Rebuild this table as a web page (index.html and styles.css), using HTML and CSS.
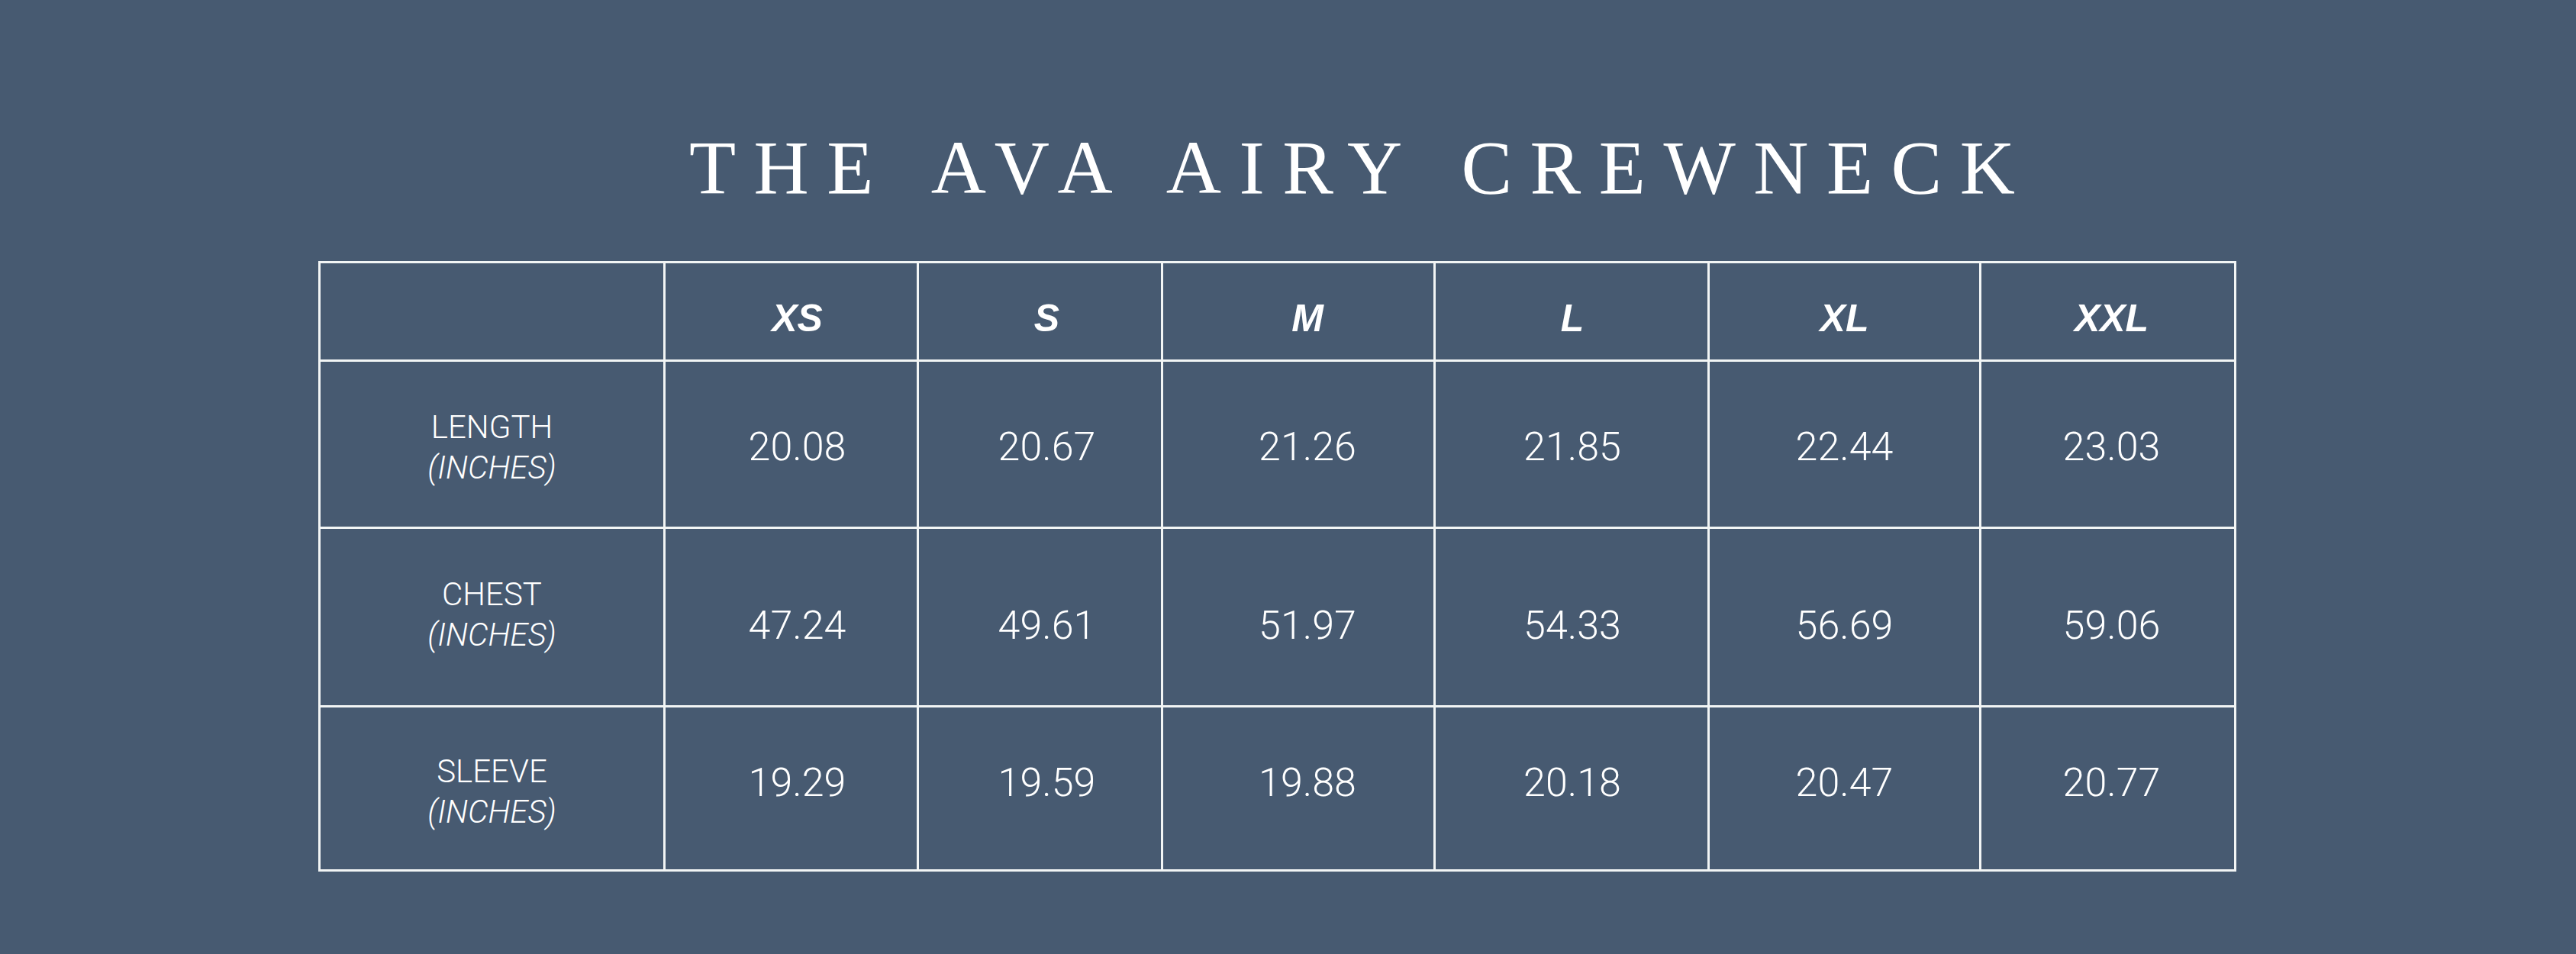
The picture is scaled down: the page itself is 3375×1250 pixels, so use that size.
FILE: index.html
```html
<!DOCTYPE html>
<html lang="en">
<head>
<meta charset="utf-8">
<title>The Ava Airy Crewneck – Size Chart</title>
<link rel="stylesheet" href="styles.css">
</head>
<body>
<main class="page">
  <h1 class="title">THE AVA AIRY CREWNECK</h1>
  <div class="chart">
    <div class="cell head"></div>
    <div class="cell head">XS</div>
    <div class="cell head">S</div>
    <div class="cell head">M</div>
    <div class="cell head">L</div>
    <div class="cell head">XL</div>
    <div class="cell head">XXL</div>

    <div class="cell label r1"><span>LENGTH</span><em>(INCHES)</em></div>
    <div class="cell val r1">20.08</div>
    <div class="cell val r1">20.67</div>
    <div class="cell val r1">21.26</div>
    <div class="cell val r1">21.85</div>
    <div class="cell val r1">22.44</div>
    <div class="cell val r1">23.03</div>

    <div class="cell label r2"><span>CHEST</span><em>(INCHES)</em></div>
    <div class="cell val r2">47.24</div>
    <div class="cell val r2">49.61</div>
    <div class="cell val r2">51.97</div>
    <div class="cell val r2">54.33</div>
    <div class="cell val r2">56.69</div>
    <div class="cell val r2">59.06</div>

    <div class="cell label r3"><span>SLEEVE</span><em>(INCHES)</em></div>
    <div class="cell val r3">19.29</div>
    <div class="cell val r3">19.59</div>
    <div class="cell val r3">19.88</div>
    <div class="cell val r3">20.18</div>
    <div class="cell val r3">20.47</div>
    <div class="cell val r3">20.77</div>
  </div>
</main>
</body>
</html>
```
FILE: styles.css
```css
html, body {
  margin: 0;
  padding: 0;
  background: #475a71;
}

.page {
  width: 3375px;
  height: 1250px;
  overflow: hidden;
  display: flex;
  flex-direction: column;
  align-items: flex-start;
}

.title {
  margin: 170px 0 0 903px;
  font-family: "Liberation Serif", "Times New Roman", serif;
  font-weight: normal;
  font-size: 100px;
  line-height: 100px;
  letter-spacing: 23.5px;
  word-spacing: 9px;
  color: #ffffff;
  white-space: nowrap;
}

.chart {
  margin: 72px 0 0 417px;
  display: grid;
  grid-template-columns: 449px 329px 317px 354px 356px 353px 331px;
  grid-template-rows: 126px 216px 231px 212px;
  gap: 3px;
  padding: 3px;
  background: #f2f5f5;
  font-family: "Roboto", "Liberation Sans", Arial, sans-serif;
  font-weight: 300;
  color: #ffffff;
}

.cell {
  background: #475a71;
  display: flex;
  flex-direction: column;
  align-items: center;
  justify-content: center;
  box-sizing: border-box;
}

/* small per-column nudges of the centred content */
.cell:nth-child(7n+2) { padding-left: 16px; }
.cell:nth-child(7n+3) { padding-left: 18px; }
.cell:nth-child(7n+4) { padding-left: 24px; }
.cell:nth-child(7n+5) { padding-left: 2px; }
.cell:nth-child(7n+7) { padding-left: 10px; }

.head {
  font-family: "Liberation Sans", Arial, sans-serif;
  font-weight: bold;
  font-style: italic;
  font-size: 50px;
  padding-top: 18px;
}

.val {
  font-size: 52px;
}

.val.r1 { padding-top: 6px; }
.val.r2 { padding-top: 22px; }
.val.r3 { padding-bottom: 16px; }

.label {
  font-size: 42px;
  line-height: 53px;
}

.label em {
  font-style: italic;
}

.label.r1 { padding-top: 8px; }
.label.r2 { padding-bottom: 7px; }
.label.r3 { padding-top: 8px; }
```
